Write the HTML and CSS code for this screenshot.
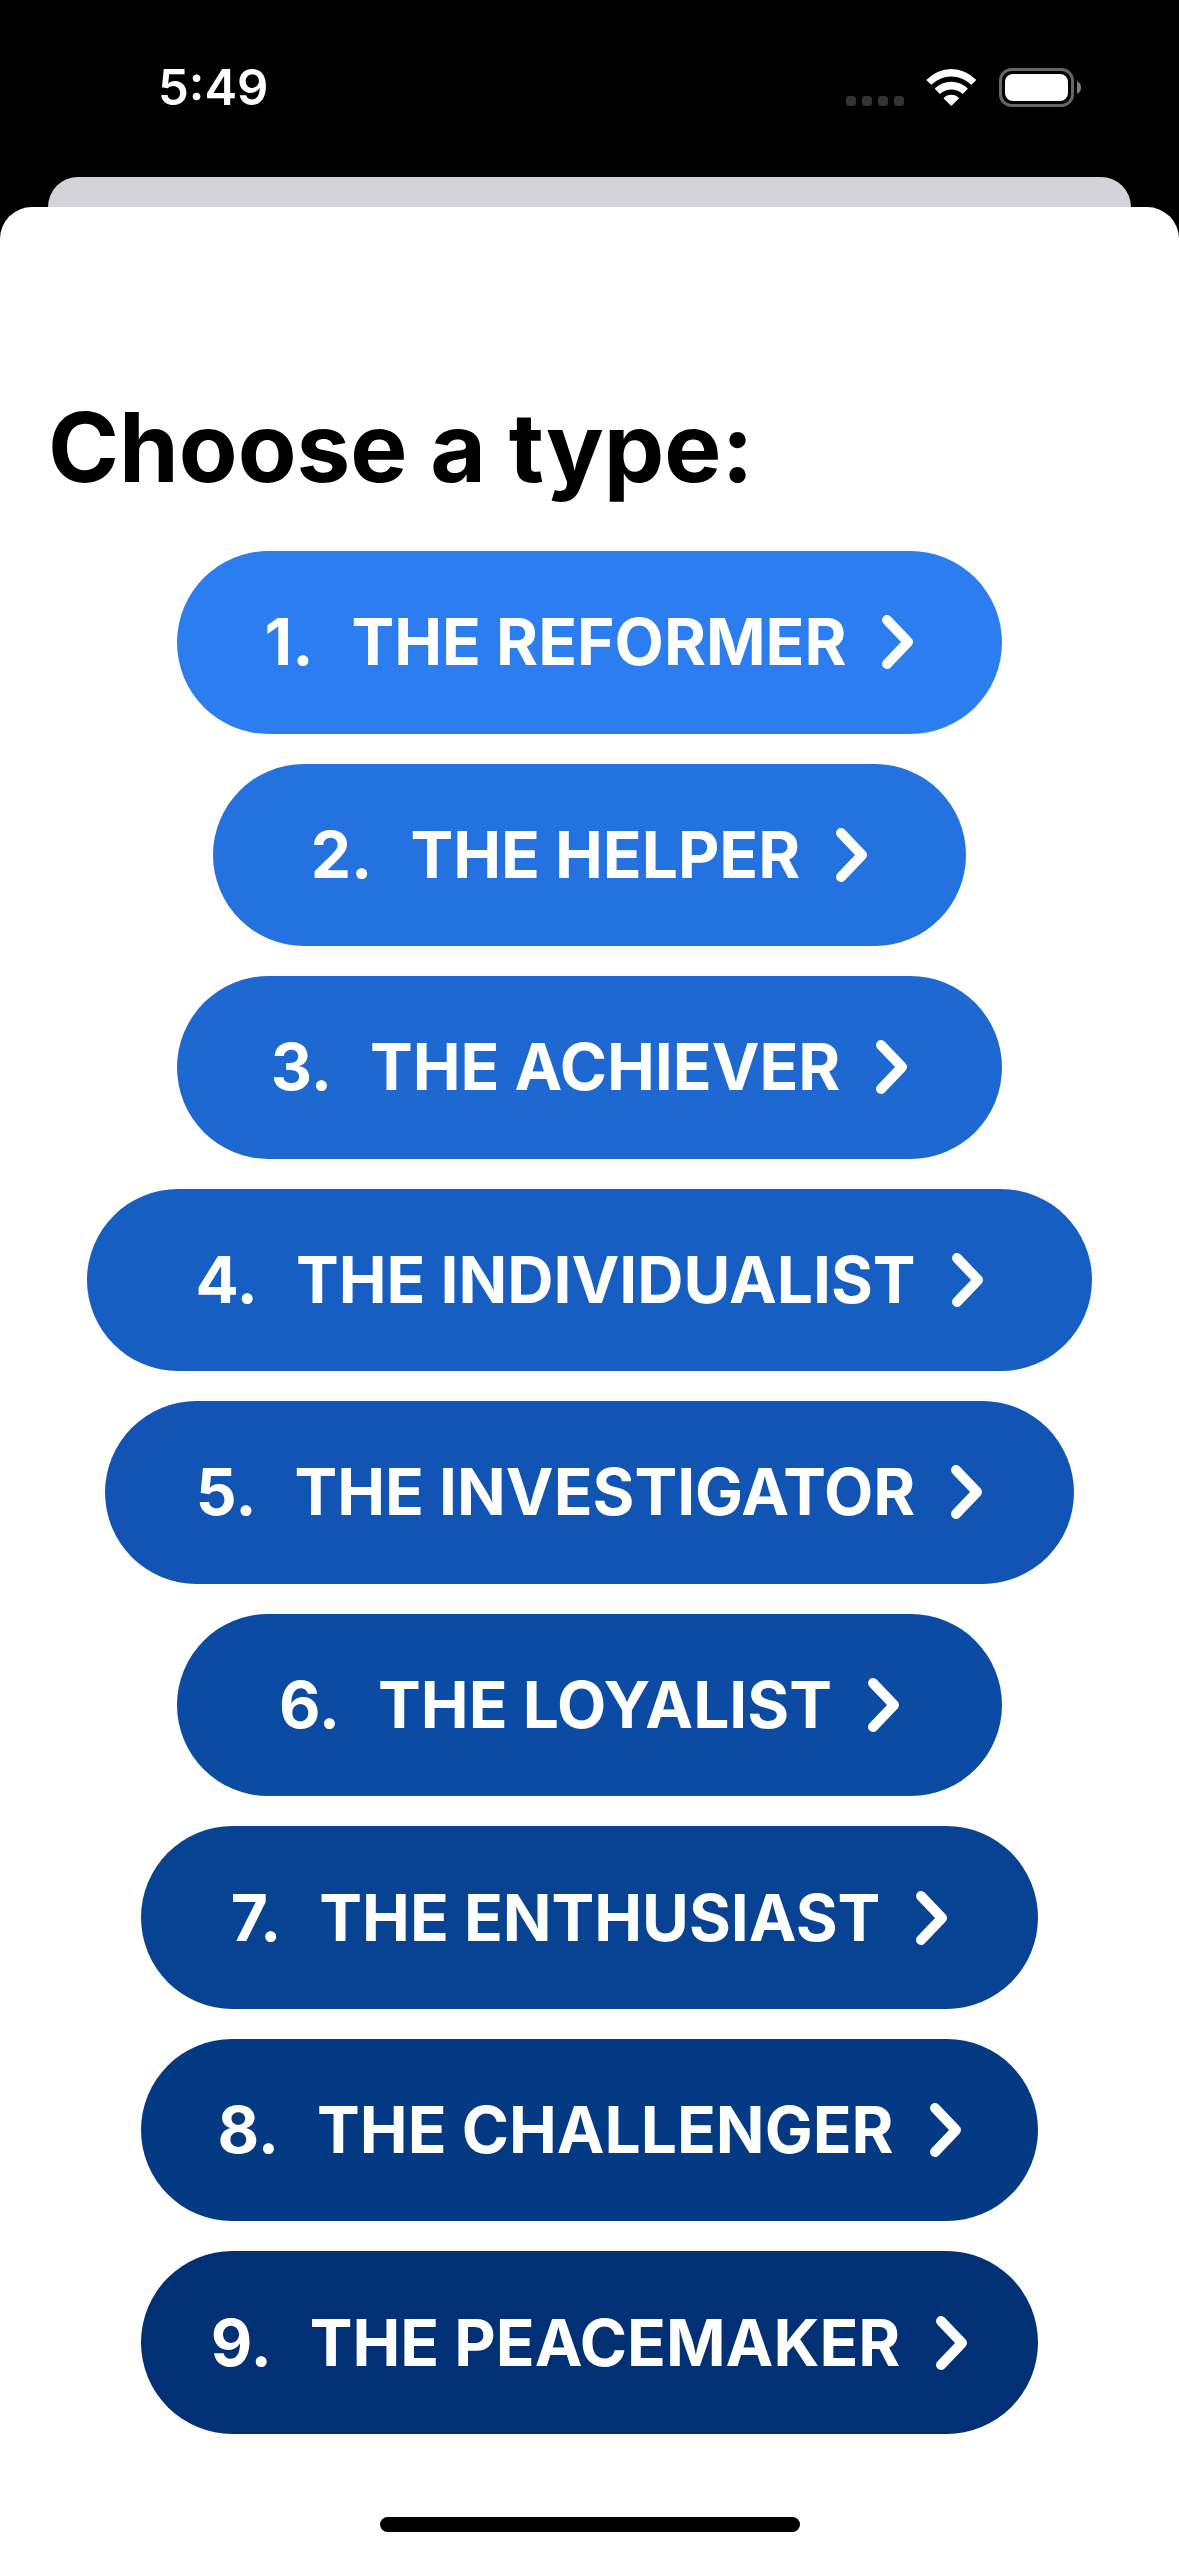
FILE: index.html
```html
<!DOCTYPE html>
<html lang="en">
<head>
<meta charset="utf-8">
<meta name="viewport" content="width=device-width, initial-scale=1">
<title>Choose a type</title>
<link rel="stylesheet" href="styles.css">
</head>
<body>
<header class="status">
  <time class="clock">5:49</time>
  <div class="indicators">
    <svg class="dots" width="58" height="10" viewBox="0 0 58 10" fill="#333"><rect width="10" height="10" rx="3"/><rect x="16" width="10" height="10" rx="3"/><rect x="32" width="10" height="10" rx="3"/><rect x="48" width="10" height="10" rx="3"/></svg>
    <svg class="wifi" width="51" height="38" viewBox="0 0 51 38" fill="#fff"><path d="M.3 11A34 34 0 0 1 50.300 11L45.300 15.700A28.500 28.500 0 0 0 5.300 15.700Z"/><path d="M8.700 19.700A23.200 23.200 0 0 1 41.900 19.700L36.600 25A16.400 16.400 0 0 0 14 25Z"/><path d="M17.500 29.300A10.500 10.500 0 0 1 33.100 29.300L25.300 37Z"/></svg>
    <svg class="battery" width="82" height="39" viewBox="0 0 82 39"><rect x="1.500" y="1.500" width="72" height="36" rx="11" fill="none" stroke="#666" stroke-width="3"/><rect x="6" y="6" width="63" height="27" rx="8" fill="#fff"/><path d="M78 13Q82 15 82 19.500T78 26Z" fill="#808080"/></svg>
  </div>
</header>
<div class="backdrop"></div>
<main class="sheet">
  <h1 class="title">Choose a type:</h1>
  <div class="types">
    <button class="type w3 c1"><span class="num">1.</span><span>THE REFORMER</span><svg class="chevron" viewBox="0 0 32 54"><path d="M5 5L26 27L5 49"/></svg></button>
    <button class="type w2 c2"><span class="num">2.</span><span>THE HELPER</span><svg class="chevron" viewBox="0 0 32 54"><path d="M5 5L26 27L5 49"/></svg></button>
    <button class="type w3 c3"><span class="num">3.</span><span>THE ACHIEVER</span><svg class="chevron" viewBox="0 0 32 54"><path d="M5 5L26 27L5 49"/></svg></button>
    <button class="type w6 c4"><span class="num">4.</span><span>THE INDIVIDUALIST</span><svg class="chevron" viewBox="0 0 32 54"><path d="M5 5L26 27L5 49"/></svg></button>
    <button class="type w5 c5"><span class="num">5.</span><span>THE INVESTIGATOR</span><svg class="chevron" viewBox="0 0 32 54"><path d="M5 5L26 27L5 49"/></svg></button>
    <button class="type w3 c6"><span class="num">6.</span><span>THE LOYALIST</span><svg class="chevron" viewBox="0 0 32 54"><path d="M5 5L26 27L5 49"/></svg></button>
    <button class="type w4 c7"><span class="num">7.</span><span>THE ENTHUSIAST</span><svg class="chevron" viewBox="0 0 32 54"><path d="M5 5L26 27L5 49"/></svg></button>
    <button class="type w4 c8"><span class="num">8.</span><span>THE CHALLENGER</span><svg class="chevron" viewBox="0 0 32 54"><path d="M5 5L26 27L5 49"/></svg></button>
    <button class="type w4 c9"><span class="num">9.</span><span>THE PEACEMAKER</span><svg class="chevron" viewBox="0 0 32 54"><path d="M5 5L26 27L5 49"/></svg></button>
  </div>
  <div class="home"></div>
</main>
</body>
</html>
```
FILE: styles.css
```css
* { box-sizing: border-box; }
body {
  margin: 0;
  min-height: 100vh;
  display: flex;
  flex-direction: column;
  background: #000;
  font-family: Inter, "Liberation Sans", sans-serif;
}
.status {
  height: 177px;
  padding: 0 98px 2px 158px;
  display: flex;
  justify-content: space-between;
  align-items: center;
  color: #fff;
}
.clock { font-size: 49px; font-weight: 600; line-height: 60px; }
.indicators { display: flex; align-items: center; gap: 22px; }
.dots { margin-top: 27px; }
.backdrop {
  height: 30px;
  margin: 0 48px;
  border-radius: 30px 30px 0 0;
  background: #d4d3d9;
}
.sheet {
  flex: 1;
  display: flex;
  flex-direction: column;
  padding: 184px 0 24px;
  border-radius: 32px 32px 0 0;
  background: #fff;
}
.title {
  margin: 0 48px 48px;
  font-size: 96px;
  line-height: 112px;
  font-weight: 700;
}
.types {
  flex: 1;
  display: grid;
  grid-auto-rows: 1fr;
  justify-items: center;
  gap: 30px;
}
.type {
  min-height: 120px;
  max-width: 100%;
  padding: 0;
  border: 0;
  border-radius: 92px;
  display: flex;
  align-items: center;
  justify-content: center;
  color: #fff;
  font: 700 64px/80px Inter, "Liberation Sans", sans-serif;
}
.num { margin-right: 38px; }
.chevron {
  width: 32px;
  height: 54px;
  margin-left: 36px;
  fill: none;
  stroke: #fff;
  stroke-width: 10;
  stroke-linecap: round;
  stroke-linejoin: round;
}
.w2 { width: 753px; }
.w3 { width: 825px; }
.w4 { width: 897px; }
.w5 { width: 969px; }
.w6 { width: 1005px; }
.c1 { background: #2c7df0; }
.c2 { background: #2472e0; }
.c3 { background: #1e68d1; }
.c4 { background: #175ec2; }
.c5 { background: #1254b3; }
.c6 { background: #0c4ba3; }
.c7 { background: #084393; }
.c8 { background: #043a84; }
.c9 { background: #023075; }
.home {
  width: 420px;
  height: 15px;
  margin: 83px auto 0;
  border-radius: 8px;
  background: #000;
}
```
